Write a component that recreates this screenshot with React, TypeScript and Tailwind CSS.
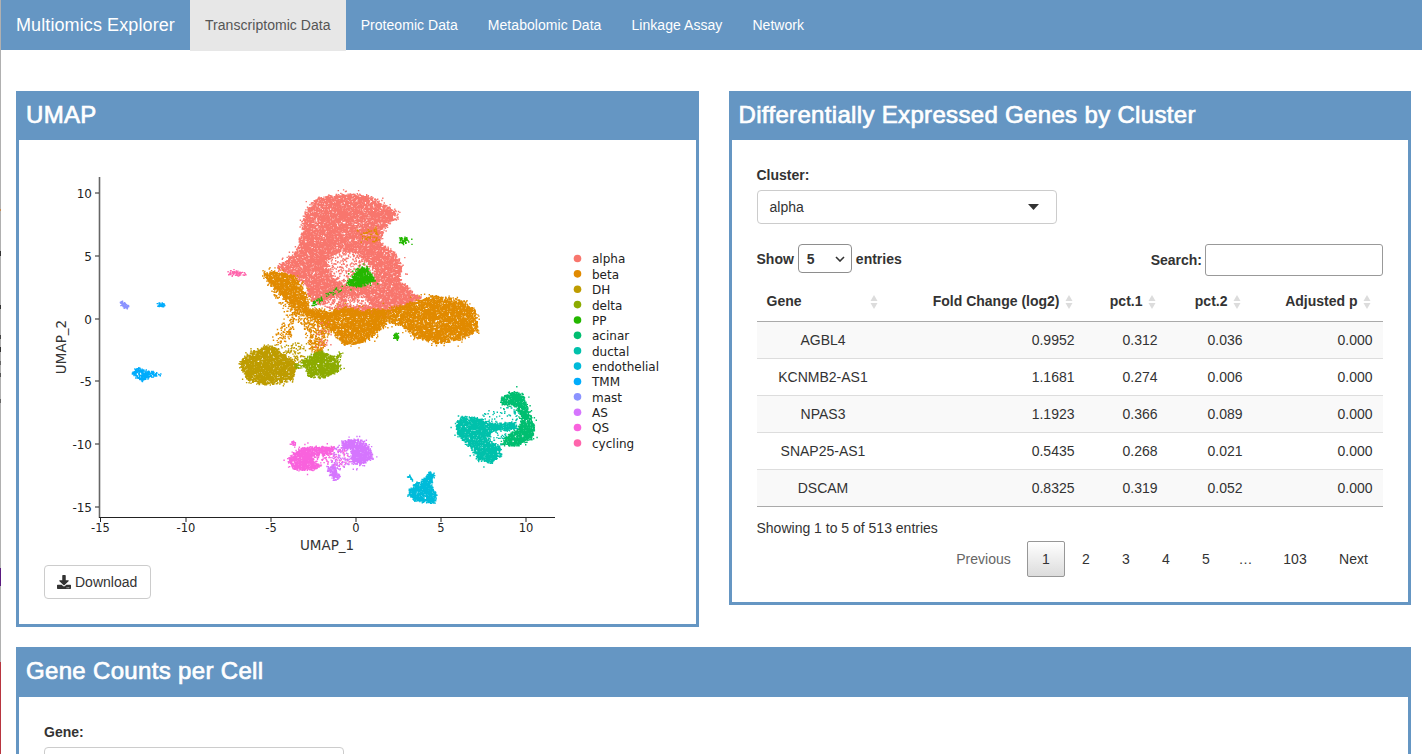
// App.tsx
import React from "react";
import { FaDownload } from "react-icons/fa";

type Pt = [number, number];

interface Blob {
  color: string;
  poly: Pt[];
  density: number;
  holes?: Pt[][];
  halo?: number;
}

const palette = {
  alpha: "#F8766D",
  beta: "#E18A00",
  dh: "#BE9C00",
  delta: "#8CAB00",
  pp: "#24B700",
  acinar: "#00BE70",
  ductal: "#00C1AB",
  endothelial: "#00BBDA",
  tmm: "#00ACFC",
  mast: "#8B93FF",
  as: "#D575FE",
  qs: "#F962DD",
  cycling: "#FF65AC",
};

// the polygons were read off zoomed crops, so map them back to page pixels
const z3 = (pts: number[][]): Pt[] => pts.map(([x, y]) => [230 + x / 3, 180 + y / 3]);
const z4 = (pts: number[][]): Pt[] => pts.map(([x, y]) => [270 + x / 3, 370 + y / 3]);

const alphaHole = z3([[285, 240], [330, 208], [385, 218], [435, 270], [425, 305], [350, 320], [310, 300]]);
const alphaGapA = z3([[345, 350], [400, 345], [420, 375], [350, 382]]);
const alphaGapB = z3([[285, 355], [330, 345], [320, 380], [280, 380]]);

const blobs: Blob[] = [
  {
    color: palette.alpha,
    density: 1.4,
    halo: 0.08,
    holes: [alphaHole, alphaGapA, alphaGapB],
    poly: z3([
      [250, 60], [300, 44], [370, 40], [430, 52], [458, 75], [490, 90], [490, 112], [470, 125], [445, 185], [490, 215],
      [515, 260], [508, 300], [550, 340], [575, 352], [500, 385], [440, 410], [400, 400], [340, 395], [240, 360],
      [225, 310], [160, 272], [135, 265], [165, 240], [200, 210], [215, 150], [225, 90],
    ]),
  },
  { color: palette.alpha, density: 0.24, poly: alphaHole },
  { color: palette.alpha, density: 0.3, poly: alphaGapA },
  { color: palette.alpha, density: 0.3, poly: alphaGapB },
  { color: palette.alpha, density: 0.35, poly: z3([[460, 75], [505, 90], [505, 125], [470, 130]]) },
  { color: palette.beta, density: 0.22, poly: z3([[380, 150], [440, 140], [445, 180], [390, 185]]) },
  {
    color: palette.beta,
    density: 0.3,
    poly: z3([[100, 285], [160, 300], [200, 400], [180, 470], [140, 500], [125, 470], [170, 410], [130, 345]]),
  },
  {
    color: palette.beta,
    density: 0.55,
    poly: z3([[190, 395], [240, 385], [300, 420], [290, 470], [272, 520], [240, 510], [225, 450]]),
  },
  {
    color: palette.beta,
    density: 1.5,
    halo: 0.1,
    poly: z3([
      [97, 280], [130, 272], [190, 285], [225, 340], [235, 385], [300, 392], [340, 382], [400, 390], [440, 385],
      [470, 390], [520, 372], [600, 348], [690, 356], [732, 385], [742, 450], [690, 476], [630, 488], [560, 472],
      [510, 432], [470, 422], [430, 465], [385, 490], [340, 490], [290, 440], [262, 415], [225, 400], [190, 385],
      [150, 340],
    ]),
  },
  { color: palette.alpha, density: 0.1, poly: z3([[270, 420], [300, 420], [300, 500], [255, 500]]) },
  { color: palette.dh, density: 0.2, poly: [[262, 345], [305, 342], [305, 362], [270, 358]] },
  {
    color: palette.dh,
    density: 1.7,
    halo: 0.06,
    poly: [[239, 362], [250, 351], [270, 346], [285, 355], [297, 365], [291, 379], [268, 384], [248, 381]],
  },
  {
    color: palette.delta,
    density: 1.7,
    halo: 0.05,
    poly: [[302, 360], [320, 350], [335, 358], [341, 368], [325, 377], [308, 375]],
  },
  { color: palette.delta, density: 0.9, poly: [[294, 365], [304, 361], [304, 365], [295, 368]] },
  { color: palette.delta, density: 0.9, poly: [[335, 356], [341, 350], [342, 353], [338, 360]] },
  { color: palette.pp, density: 2, halo: 0.06, poly: z3([[350, 310], [380, 268], [410, 260], [430, 300], [390, 318]]) },
  { color: palette.pp, density: 0.8, poly: z3([[242, 378], [255, 355], [280, 352], [265, 368]]) },
  { color: palette.pp, density: 0.4, poly: z3([[280, 345], [340, 315], [345, 320], [285, 350]]) },
  { color: palette.pp, density: 1.4, halo: 0.08, poly: z3([[505, 172], [530, 170], [532, 186], [512, 190]]) },
  { color: palette.pp, density: 1.2, poly: z3([[488, 464], [500, 458], [508, 472], [492, 476]]) },
  { color: palette.ductal, density: 0.1, poly: z4([[625, 125], [740, 105], [750, 150], [650, 160]]) },
  { color: palette.ductal, density: 0.12, poly: z4([[650, 185], [725, 185], [690, 210], [655, 205]]) },
  {
    color: palette.acinar,
    density: 1.8,
    halo: 0.05,
    poly: z4([
      [690, 85], [720, 65], [755, 70], [765, 100], [790, 170], [785, 205], [730, 228], [690, 218], [715, 195],
      [745, 170], [755, 140], [735, 105], [695, 100],
    ]),
  },
  {
    color: palette.ductal,
    density: 1.8,
    halo: 0.05,
    poly: z4([
      [555, 165], [570, 140], [625, 145], [665, 160], [735, 155], [738, 175], [665, 182], [650, 205], [690, 232],
      [690, 255], [665, 275], [620, 268], [605, 235], [565, 195],
    ]),
  },
  { color: palette.qs, density: 0.2, poly: z4([[120, 250], [190, 235], [230, 235], [240, 285], [190, 290], [130, 285]]) },
  {
    color: palette.qs,
    density: 1.9,
    halo: 0.05,
    holes: [z4([[125, 255], [180, 250], [175, 285], [130, 282]])],
    poly: z4([[52, 268], [72, 245], [100, 232], [190, 228], [178, 262], [150, 285], [130, 295], [70, 297]]),
  },
  { color: palette.qs, density: 1.5, poly: z4([[62, 214], [74, 214], [74, 222], [64, 222]]) },
  { color: palette.as, density: 1.6, poly: z4([[168, 288], [190, 288], [210, 322], [190, 330]]) },
  {
    color: palette.as,
    density: 0.2,
    poly: z4([[190, 228], [240, 228], [250, 280], [210, 300], [180, 280]]),
  },
  {
    color: palette.as,
    density: 1.9,
    halo: 0.05,
    poly: z4([[215, 212], [260, 206], [290, 222], [307, 260], [272, 282], [245, 272], [244, 235], [215, 232]]),
  },
  {
    color: palette.endothelial,
    density: 1.8,
    poly: z4([[415, 360], [440, 335], [455, 330], [478, 305], [492, 308], [480, 345], [498, 375], [490, 397], [440, 392], [416, 380]]),
  },
  { color: palette.endothelial, density: 1.2, poly: z4([[406, 313], [412, 313], [430, 326], [424, 331]]) },
  { color: palette.tmm, density: 1.2, poly: [[130, 372], [137, 367], [144, 370], [163, 374], [148, 377], [142, 381], [136, 377]] },
  { color: palette.tmm, density: 2, poly: [[157, 303], [163, 303], [164, 305], [158, 306]] },
  { color: palette.mast, density: 2, poly: [[119, 301], [123, 301], [128, 307], [124, 308]] },
  { color: palette.cycling, density: 1.2, poly: [[228, 271], [235, 270], [247, 274], [240, 275], [229, 274]] },
];

const inside = (p: Pt, poly: Pt[]) => {
  let hit = false;
  for (let i = 0, j = poly.length - 1; i < poly.length; j = i++) {
    const [xi, yi] = poly[i];
    const [xj, yj] = poly[j];
    if (yi > p[1] !== yj > p[1] && p[0] < ((xj - xi) * (p[1] - yi)) / (yj - yi) + xi) hit = !hit;
  }
  return hit;
};

// seeded so that every render gives the same cloud
let seed = 20240611;
const rand = () => {
  seed = (seed + 0x6d2b79f5) | 0;
  let t = Math.imul(seed ^ (seed >>> 15), 1 | seed);
  t = (t + Math.imul(t ^ (t >>> 7), 61 | t)) ^ t;
  return ((t ^ (t >>> 14)) >>> 0) / 4294967296;
};

const cloud = blobs.map((blob) => {
  const xs = blob.poly.map((p) => p[0]);
  const ys = blob.poly.map((p) => p[1]);
  const x0 = Math.min(...xs);
  const y0 = Math.min(...ys);
  const w = Math.max(...xs) - x0;
  const h = Math.max(...ys) - y0;
  let d = "";
  const tries = Math.ceil(w * h * blob.density);
  for (let i = 0; i < tries; i++) {
    const p: Pt = [x0 + rand() * w, y0 + rand() * h];
    if (!inside(p, blob.poly)) continue;
    if (blob.holes && blob.holes.some((hole) => inside(p, hole))) continue;
    // a few points stray further from the body, which gives the fuzzy rim
    const spread = rand() < (blob.halo ?? 0) ? 14 : 3;
    const jx = p[0] + (rand() - 0.5) * spread;
    const jy = p[1] + (rand() - 0.5) * spread;
    d += `M${jx.toFixed(1)} ${jy.toFixed(1)}h1.4v1.4h-1.4z`;
  }
  return { color: blob.color, d };
});

const legend: [string, string][] = [
  ["alpha", palette.alpha],
  ["beta", palette.beta],
  ["DH", palette.dh],
  ["delta", palette.delta],
  ["PP", palette.pp],
  ["acinar", palette.acinar],
  ["ductal", palette.ductal],
  ["endothelial", palette.endothelial],
  ["TMM", palette.tmm],
  ["mast", palette.mast],
  ["AS", palette.as],
  ["QS", palette.qs],
  ["cycling", palette.cycling],
];

const xTicks: [string, number][] = [["-15", 100.5], ["-10", 186], ["-5", 271], ["0", 356], ["5", 441], ["10", 526]];
const yTicks: [string, number][] = [["10", 193], ["5", 256], ["0", 319], ["-5", 381], ["-10", 444], ["-15", 507]];

const UmapPlot = () => (
  <svg viewBox="44 150 627 405" className="block w-[627px] h-[405px] font-['DejaVu_Sans',sans-serif]">
    <g className="blur-[0.4px]">
      {cloud.map((c, i) => (
        <path key={i} d={c.d} fill={c.color} />
      ))}
    </g>
    <line x1={99.5} y1={177} x2={99.5} y2={518} stroke="#666" strokeWidth={1.6} />
    <line x1={99} y1={517.5} x2={555} y2={517.5} stroke="#222" strokeWidth={1.2} />
    {xTicks.map(([label, x]) => (
      <g key={label}>
        <line x1={x} y1={518} x2={x} y2={522} stroke="#222" />
        <text x={x} y={532} fontSize={11.5} fill="#222" textAnchor="middle">
          {label}
        </text>
      </g>
    ))}
    {yTicks.map(([label, y]) => (
      <g key={label}>
        <line x1={95} y1={y} x2={99} y2={y} stroke="#222" />
        <text x={92} y={y + 4.5} fontSize={12} fill="#222" textAnchor="end">
          {label}
        </text>
      </g>
    ))}
    <text x={327} y={550} fontSize={13.5} fill="#333" textAnchor="middle">
      UMAP_1
    </text>
    <text x={66} y={347} fontSize={13.5} fill="#333" textAnchor="middle" transform="rotate(-90 66 347)">
      UMAP_2
    </text>
    {legend.map(([label, color], i) => (
      <g key={label}>
        <circle cx={577.5} cy={258.5 + i * 15.37} r={3.8} fill={color} />
        <text x={592} y={263.4 + i * 15.37} fontSize={12} fill="#222">
          {label}
        </text>
      </g>
    ))}
  </svg>
);

const SortIcon = () => (
  <svg width="8" height="16" viewBox="0 0 8 16" className="absolute right-[12px] top-[13px]">
    <path d="M4 1 L7.5 7 H0.5 Z" fill="#dcdcdc" />
    <path d="M4 15 L7.5 9 H0.5 Z" fill="#dcdcdc" />
  </svg>
);

const Panel = ({ title, tall, children }: { title: string; tall?: boolean; children: React.ReactNode }) => (
  <section className="border-[3px] border-t-0 border-[#6596c3]">
    <h2
      className={`-mx-[3px] bg-[#6596c3] pl-[10px] pt-[6px] text-[24px] leading-[36px] font-normal tracking-[0.33px] text-white [-webkit-text-stroke:0.7px_white] ${
        tall ? "h-[50px]" : "h-[49px]"
      }`}
    >
      {title}
    </h2>
    {children}
  </section>
);

const Dropdown = ({ value }: { value: string }) => (
  <div className="flex items-center justify-between w-[300px] h-[34px] border border-[#ccc] rounded-[4px] pl-[12px] pr-[17px] text-[14px] text-[#333]">
    <span>{value}</span>
    <svg width="11" height="6" viewBox="0 0 11 6">
      <path d="M0 0 H11 L5.5 6 Z" fill="#333" />
    </svg>
  </div>
);

const navItems = ["Proteomic Data", "Metabolomic Data", "Linkage Assay", "Network"];

const columns = [
  { label: "Gene", width: "w-[133px]", pad: "text-left pl-[10px]" },
  { label: "Fold Change (log2)", width: "w-[195px]", pad: "text-right pr-[25px]" },
  { label: "pct.1", width: "w-[83px]", pad: "text-right pr-[25px]" },
  { label: "pct.2", width: "w-[85px]", pad: "text-right pr-[25px]" },
  { label: "Adjusted p", width: "w-[130px]", pad: "text-right pr-[25px]" },
];

const rows = [
  ["AGBL4", "0.9952", "0.312", "0.036", "0.000"],
  ["KCNMB2-AS1", "1.1681", "0.274", "0.006", "0.000"],
  ["NPAS3", "1.1923", "0.366", "0.089", "0.000"],
  ["SNAP25-AS1", "0.5435", "0.268", "0.021", "0.000"],
  ["DSCAM", "0.8325", "0.319", "0.052", "0.000"],
];

const pages = [
  { label: "Previous", width: "w-[83px]", text: "text-[#666]" },
  { label: "1", width: "w-[38px]", text: "text-[#333] border border-[#979797] rounded-[2px] bg-gradient-to-b from-white to-[#dcdcdc]" },
  { label: "2", width: "w-[38px]", text: "text-[#333]" },
  { label: "3", width: "w-[38px]", text: "text-[#333]" },
  { label: "4", width: "w-[38px]", text: "text-[#333]" },
  { label: "5", width: "w-[38px]", text: "text-[#333]" },
  { label: "…", width: "w-[39px] pr-[2px]", text: "text-[#333]" },
  { label: "103", width: "w-[54px]", text: "text-[#333]" },
  { label: "Next", width: "w-[59px]", text: "text-[#333]" },
];

// what shows of the window behind the browser: [height, colour]
const sliver: [number, string][] = [
  [209, "#b0b0b0"],
  [2, "#c98a50"],
  [40, "#b0b0b0"],
  [5, "#333333"],
  [49, "#b0b0b0"],
  [4, "#333333"],
  [26, "#b0b0b0"],
  [4, "#444444"],
  [8, "#b0b0b0"],
  [5, "#333333"],
  [9, "#b0b0b0"],
  [4, "#666666"],
  [8, "#b0b0b0"],
  [4, "#555555"],
  [22, "#b0b0b0"],
  [4, "#666666"],
  [165, "#b0b0b0"],
  [18, "#5a1a80"],
  [76, "#b0b0b0"],
  [92, "#b8353f"],
];

export default function App() {
  return (
    <div className="flex h-[754px] overflow-hidden bg-white text-[14px] leading-[20px] text-[#333] font-['Liberation_Sans',Arial,sans-serif]">
      <div className="flex flex-col w-px shrink-0">
        {sliver.map(([height, color], i) => (
          <div key={i} style={{ height, backgroundColor: color }} />
        ))}
      </div>

      <div className="flex-1 min-w-0">
        <nav className="flex h-[50px] bg-[#6596c3] text-white tracking-[0.05px]">
          <a className="pl-[15px] pr-[15px] text-[18px] leading-[50px] tracking-[0.1px]">Multiomics Explorer</a>
          <a className="h-[51px] px-[15px] leading-[50px] bg-[#e7e7e7] text-[#555]">Transcriptomic Data</a>
          {navItems.map((item) => (
            <a key={item} className="px-[15px] leading-[50px]">
              {item}
            </a>
          ))}
        </nav>

        <main className="pl-[15px] pr-[11px] pt-[41px]">
          <div className="grid grid-cols-2 gap-x-[30px] items-start">
            <Panel title="UMAP">
              <div className="px-[25px] pt-[10px] pb-[25px]">
                <UmapPlot />
                <button className="flex items-center gap-[4px] mt-[10px] h-[34px] w-[107px] pl-[12px] border border-[#ccc] rounded-[4px] text-[#333]">
                  <FaDownload className="w-[14px] h-[14px]" />
                  Download
                </button>
              </div>
            </Panel>

            <Panel title="Differentially Expressed Genes by Cluster">
              <div className="px-[25px] pt-[25px] pb-[25px]">
                <label className="block mb-[5px] font-bold">Cluster:</label>
                <Dropdown value="alpha" />

                <div className="flex justify-between mt-[20px] h-[32px]">
                  <div className="flex items-start gap-[4px] font-bold">
                    <span className="leading-[30px]">Show</span>
                    <div className="flex items-center justify-between w-[54px] h-[29px] border border-[#8e8e8e] rounded-[4px] pl-[8px] pr-[6px]">
                      5
                      <svg width="10" height="6" viewBox="0 0 10 6" fill="none" stroke="#333" strokeWidth="1.6">
                        <path d="M1 1 L5 5 L9 1" />
                      </svg>
                    </div>
                    <span className="leading-[30px]">entries</span>
                  </div>
                  <div className="flex items-start gap-[3px] font-bold">
                    <span className="leading-[32px]">Search:</span>
                    <div className="w-[178px] h-[32px] border border-[#999] rounded-[3px]" />
                  </div>
                </div>

                <table className="mt-[5px] w-[626px] table-fixed border-collapse">
                  <thead>
                    <tr className="border-b border-[#aaa]">
                      {columns.map((col) => (
                        <th key={col.label} className={`relative h-[40px] p-0 font-bold ${col.width} ${col.pad}`}>
                          {col.label}
                          <SortIcon />
                        </th>
                      ))}
                    </tr>
                  </thead>
                  <tbody>
                    {rows.map((row, i) => (
                      <tr
                        key={row[0]}
                        className={`border-b ${i === rows.length - 1 ? "border-[#aaa]" : "border-[#ddd]"} ${
                          i % 2 === 0 ? "bg-[#f9f9f9]" : "bg-white"
                        }`}
                      >
                        {row.map((cell, j) => (
                          <td key={j} className={`h-[37px] p-0 ${j === 0 ? "text-center" : "text-right pr-[10px]"}`}>
                            {cell}
                          </td>
                        ))}
                      </tr>
                    ))}
                  </tbody>
                </table>

                <div className="mt-[11px]">Showing 1 to 5 of 513 entries</div>
                <div className="flex justify-end gap-[2px] mt-[3px]">
                  {pages.map((page) => (
                    <span key={page.label} className={`flex items-center justify-center h-[36px] ${page.width} ${page.text}`}>
                      {page.label}
                    </span>
                  ))}
                </div>
              </div>
            </Panel>
          </div>

          <div className="mt-[20px]">
            <Panel title="Gene Counts per Cell" tall>
              <div className="px-[25px] pt-[25px]">
                <label className="block mb-[5px] font-bold">Gene:</label>
                <Dropdown value="" />
              </div>
            </Panel>
          </div>
        </main>
      </div>
    </div>
  );
}
